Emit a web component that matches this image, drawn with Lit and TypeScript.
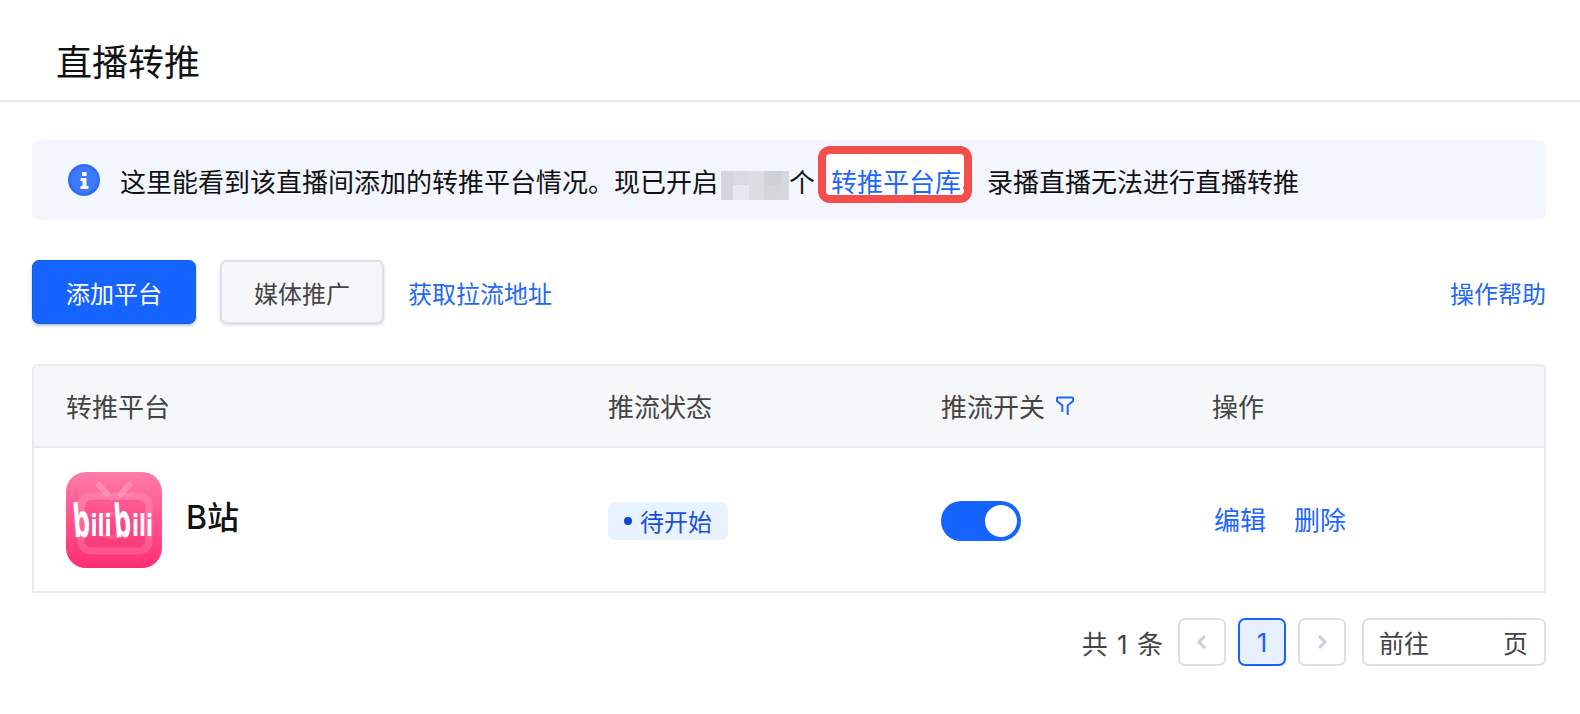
import { LitElement, html, css } from "lit";
import { customElement } from "lit/decorators.js";

const mosaicCols = [12, 16, 15, 17, 8];
const mosaic = [
  ["#d3d6dc", "#d8dbe3", "#dcdde2", "#cdd2d9", "#d5d7de"],
  ["#d3d6dc", "#e6e8f0", "#dcdde2", "#d4d6dc", "#d5d7de"],
];

@customElement("app-root")
export class AppRoot extends LitElement {
  static styles = css`
    :host { display: block; background: #fff; height: 714px; overflow: hidden;
      font-family: "Inter", "Noto Sans CJK SC", sans-serif; color: #111; }
    .head { height: 102px; box-sizing: border-box; border-bottom: 2px solid #e6e8f0; padding: 0 0 0 56px; display: flex; align-items: center; }
    h1 { margin: 0; font-size: 36px; font-weight: 400; line-height: 48px; position: relative; top: 13px; color: #111; }
    .body { padding: 38px 34px 0 32px; }
    .alert { height: 80px; background: #f3f6fe; border-radius: 8px; display: flex; align-items: center; padding-left: 36px; font-size: 26px; color: #111; white-space: nowrap; }
    .alert .ic { width: 32px; height: 34px; margin-right: 20px; flex: none; }
    .mos { width: 68px; height: 29px; margin: 0 0 0 3px; flex: none; position: relative; top: 5px; display: grid; grid-template-columns: 12px 16px 15px 17px 8px; grid-auto-rows: 1fr; background: #d3d6dc; }
    .mark { margin: 0 0 11px 3px; width: 154px; height: 57px; box-sizing: border-box; border: 8px solid #f44e4c; border-radius: 12px; background: #fff; display: flex; align-items: center; padding: 11px 0 0 5px; color: #1d66ff; flex: none; overflow: hidden; }
    .mark em { font-style: normal; color: #111; margin-left: -2px; }
    .after { margin-left: 15px; }
    .actions { display: flex; align-items: center; margin-top: 40px; height: 64px; }
    .btn { height: 64px; box-sizing: border-box; border-radius: 7px; font-size: 24px; display: flex; align-items: center; justify-content: center; }
    .primary { width: 164px; background: #1664ff; color: #fff; border: 1px solid #1259e0; box-shadow: 0 2px 3px rgba(40,60,110,.3); }
    .plain { width: 164px; margin-left: 24px; background: #f6f7f9; color: #444; border: 2px solid #dde0e8; box-shadow: 0 1px 3px rgba(40,60,110,.2); }
    .link { color: #2468f2; font-size: 24px; }
    .pull { margin-left: 24px; }
    .help { margin-left: auto; }
    .table { margin-top: 40px; border: 2px solid #e8eaf0; border-radius: 6px 6px 0 0; height: 229px; box-sizing: border-box; }
    .row { display: grid; grid-template-columns: 542px 333px 271px 1fr; padding-left: 32px; }
    .th { height: 78px; padding-bottom: 2px; background: #f6f7f9; border-bottom: 2px solid #e8eaf0; align-items: center; font-size: 26px; color: #444; border-radius: 5px 5px 0 0; }
    .th span { display: flex; align-items: center; }
    .filter { width: 18px; height: 19px; margin-left: 11px; }
    .td { height: 143px; align-items: center; }
    .plat { display: flex; align-items: center; font-size: 32px; font-weight: 500; color: #111; }
    .plat .logo { width: 96px; height: 96px; margin-right: 24px; flex: none; }
    .plat b { font-weight: 500; position: relative; top: -5px; }
    .tag { display: inline-flex; align-items: center; width: 120px; height: 38px; background: #e8f3ff; color: #1c4fd8; border-radius: 7px; font-size: 24px; box-sizing: border-box; padding-left: 16px; position: relative; top: 1px; }
    .tag i { width: 8px; height: 8px; border-radius: 50%; background: #1246d6; margin-right: 8px; }
    .sw { width: 80px; height: 40px; background: #1664ff; border-radius: 20px; position: relative; top: 1px; }
    .sw i { position: absolute; right: 4px; top: 4px; width: 32px; height: 32px; border-radius: 50%; background: #fff; }
    .ops { display: flex; gap: 28px; font-size: 26px; color: #1d66ff; padding-left: 2px; position: relative; top: -1px; }
    .pager { display: flex; justify-content: flex-end; align-items: center; margin-top: 25px; height: 48px; color: #444; }
    .total { margin-right: 15px; font-size: 26px; word-spacing: 2px; }
    .pg { width: 48px; height: 48px; box-sizing: border-box; border: 2px solid #dde0e8; border-radius: 7px; display: flex; align-items: center; justify-content: center; margin-right: 12px; }
    .pg svg { width: 14px; height: 18px; }
    .pg.cur { background: #e8effd; border-color: #1664ff; color: #1664ff; font-size: 26px; }
    .jump { width: 184px; height: 48px; box-sizing: border-box; border: 2px solid #dde0e8; border-radius: 7px; display: flex; justify-content: space-between; align-items: center; padding: 0 16px 0 15px; margin-left: 4px; font-size: 25px; }
  `;

  private logo() {
    return html`<svg class="logo" viewBox="0 0 96 96">
      <defs><linearGradient id="lg" x1="0" y1="0" x2="0" y2="1"><stop offset="0" stop-color="#ff7ba6"/><stop offset="1" stop-color="#ff2d74"/></linearGradient></defs>
      <rect width="96" height="96" rx="20" fill="url(#lg)"/>
      <path d="M33 13 L41 22 M63 13 L55 22" stroke="#fff" stroke-opacity=".2" stroke-width="6" stroke-linecap="round"/>
      <rect x="15" y="24" width="68" height="55" rx="10" fill="none" stroke="#fff" stroke-opacity=".14" stroke-width="7"/>
      <rect x="19" y="28" width="60" height="47" rx="7" fill="#e8185f" fill-opacity=".12"/>
      <path d="M38 43 q14 -4 24 3 M34 62 q14 6 26 0" fill="none" stroke="#fff" stroke-opacity=".15" stroke-width="4"/>
      <g fill="#fff" font-family="'DejaVu Sans', sans-serif" font-weight="700">
        <text x="7" y="65" font-size="46" textLength="17" lengthAdjust="spacingAndGlyphs" transform="rotate(-4 15 50)">b</text>
        <text x="24.5" y="64" font-size="30" textLength="21" lengthAdjust="spacingAndGlyphs">ili</text>
        <text x="48" y="65" font-size="46" textLength="17" lengthAdjust="spacingAndGlyphs" transform="rotate(-4 56 50)">b</text>
        <text x="66" y="64" font-size="30" textLength="21" lengthAdjust="spacingAndGlyphs">ili</text>
      </g>
    </svg>`;
  }

  render() {
    return html`
      <div class="head"><h1>直播转推</h1></div>
      <div class="body">
        <div class="alert">
          <svg class="ic" viewBox="0 0 32 34"><circle cx="16" cy="17" r="16" fill="#2f6df6"/><circle cx="16" cy="17" r="13" fill="#3f7afc"/><rect x="14" y="9" width="4.5" height="4" fill="#fff"/><path d="M12.5 15h6v8h2v3h-8v-3h2v-5h-2z" fill="#fff"/></svg>
          <span>这里能看到该直播间添加的转推平台情况。现已开启</span>
          <div class="mos">${mosaic.flatMap((r) => r.map((c) => html`<div style="background:${c}"></div>`))}</div>
          <span>个</span>
          <div class="mark">转推平台库<em>，</em></div>
          <span class="after">录播直播无法进行直播转推</span>
        </div>
        <div class="actions">
          <div class="btn primary">添加平台</div>
          <div class="btn plain">媒体推广</div>
          <div class="link pull">获取拉流地址</div>
          <div class="link help">操作帮助</div>
        </div>
        <div class="table">
          <div class="row th">
            <span>转推平台</span><span>推流状态</span>
            <span>推流开关<svg class="filter" viewBox="0 0 18 19"><path d="M6.3 16V9.5L1 5V2.5a1 1 0 0 1 1-1h14a1 1 0 0 1 1 1V5l-5.3 4.5V19" fill="none" stroke="#1d66ff" stroke-width="2"/></svg></span>
            <span>操作</span>
          </div>
          <div class="row td">
            <div class="plat">${this.logo()}<b>B站</b></div>
            <div><span class="tag"><i></i>待开始</span></div>
            <div class="sw"><i></i></div>
            <div class="ops"><span>编辑</span><span>删除</span></div>
          </div>
        </div>
        <div class="pager">
          <span class="total">共 1 条</span>
          <div class="pg"><svg viewBox="0 0 14 18"><path d="M10 3L4 9l6 6" fill="none" stroke="#c9ced8" stroke-width="3"/></svg></div>
          <div class="pg cur">1</div>
          <div class="pg"><svg viewBox="0 0 14 18"><path d="M4 3l6 6-6 6" fill="none" stroke="#c9ced8" stroke-width="3"/></svg></div>
          <div class="jump"><span>前往</span><span>页</span></div>
        </div>
      </div>
    `;
  }
}
